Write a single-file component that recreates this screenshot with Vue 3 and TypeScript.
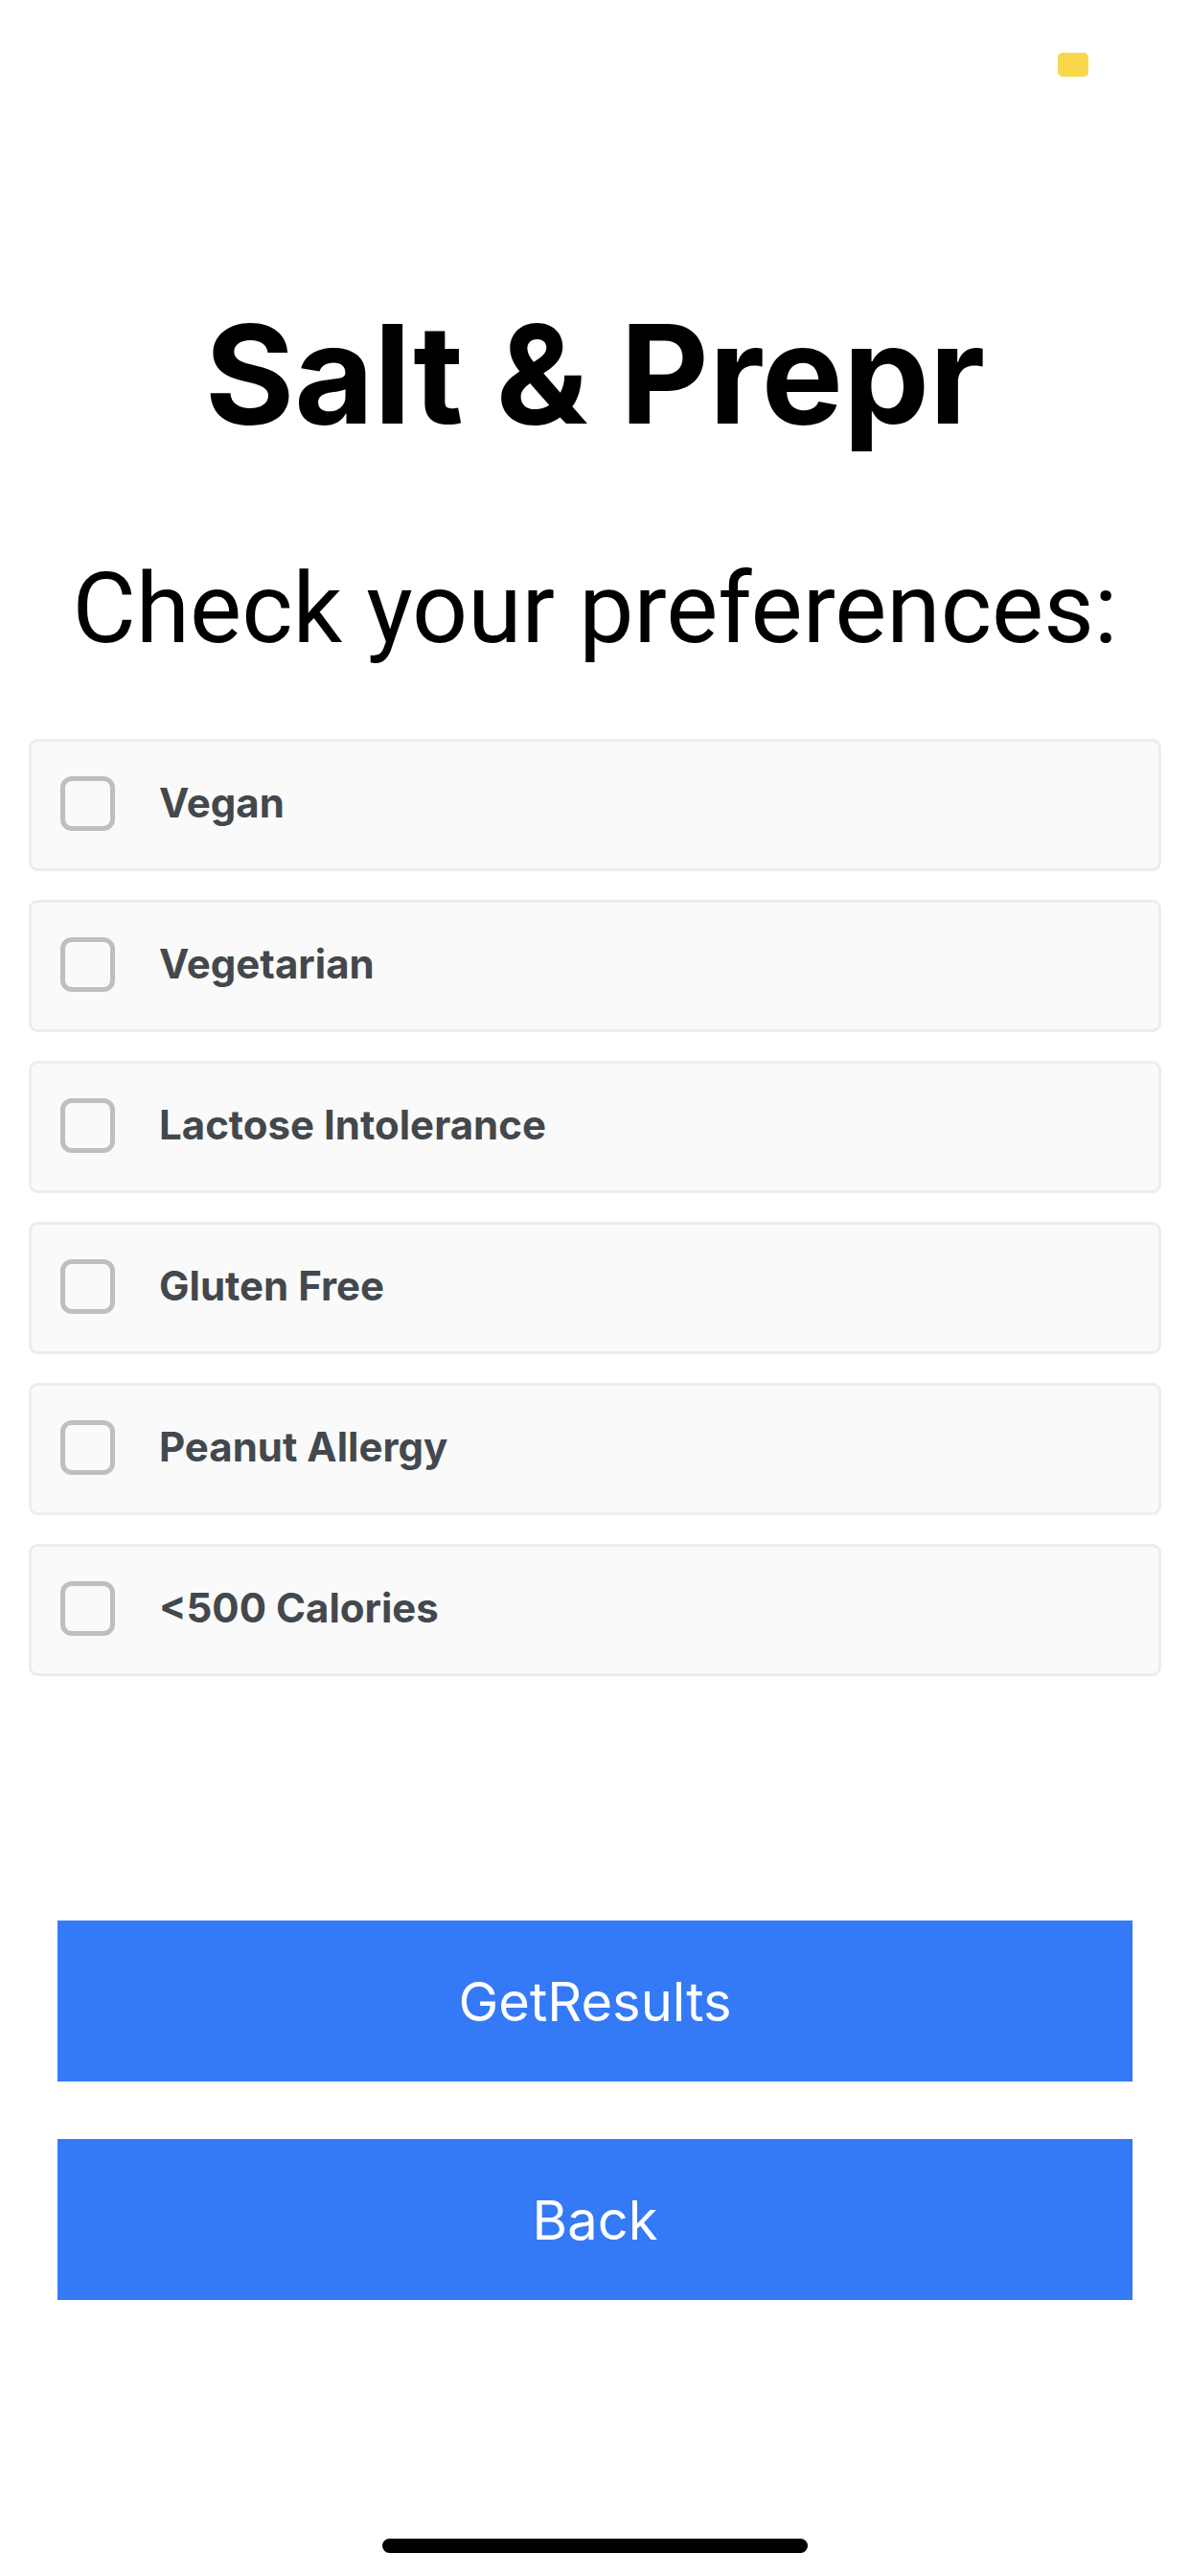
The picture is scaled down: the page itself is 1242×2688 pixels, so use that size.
<script setup lang="ts">
import { ref } from 'vue'

interface Preference {
  id: string
  label: string
}

const preferences: Preference[] = [
  { id: 'vegan', label: 'Vegan' },
  { id: 'vegetarian', label: 'Vegetarian' },
  { id: 'lactose', label: 'Lactose Intolerance' },
  { id: 'gluten', label: 'Gluten Free' },
  { id: 'peanut', label: 'Peanut Allergy' },
  { id: 'calories', label: '<500 Calories' },
]

const selected = ref<string[]>([])
</script>

<template>
  <div class="screen">
    <header class="status-bar">
      <span class="battery"></span>
    </header>

    <main class="content">
      <h1 class="title">Salt &amp; Prepr</h1>
      <h2 class="subtitle">Check your preferences:</h2>

      <ul class="options">
        <li v-for="item in preferences" :key="item.id">
          <label class="option" :for="item.id">
            <input :id="item.id" v-model="selected" class="box" type="checkbox" :value="item.id" />
            <span>{{ item.label }}</span>
          </label>
        </li>
      </ul>

      <div class="actions">
        <button class="action" type="button">GetResults</button>
        <button class="action" type="button">Back</button>
      </div>
    </main>

    <footer class="home">
      <span class="home-bar"></span>
    </footer>
  </div>
</template>

<style>
body {
  margin: 0;
  background: #fff;
}
</style>

<style scoped>
.screen {
  display: flex;
  flex-direction: column;
  box-sizing: border-box;
  min-height: 100vh;
  background: #fff;
  color: #000;
  font-family: Inter, "Liberation Sans", sans-serif;
}

.status-bar {
  display: flex;
  justify-content: flex-end;
  padding: 55px 106px 0;
}

.battery {
  width: 32px;
  height: 25px;
  border-radius: 5px;
  background: #f8d74a;
}

.content {
  padding: 220px 30px 0;
}

.title {
  margin: 0;
  font-size: 143px;
  font-weight: 700;
  line-height: 180px;
  text-align: center;
}

.subtitle {
  margin: 92px 0 0;
  font-family: Roboto, Inter, sans-serif;
  font-size: 102px;
  font-weight: 400;
  line-height: 126px;
  text-align: center;
}

.options {
  display: flex;
  flex-direction: column;
  gap: 30px;
  margin: 73px 0 0;
  padding: 0;
  list-style: none;
}

.option {
  display: flex;
  align-items: center;
  gap: 46px;
  box-sizing: border-box;
  height: 138px;
  padding: 0 30px 4px;
  border: 3px solid #ededed;
  border-radius: 9px;
  background: #fafafa;
  color: #43484d;
  font-size: 42px;
  font-weight: 700;
  line-height: 50px;
}

.box {
  flex: none;
  box-sizing: border-box;
  width: 57px;
  height: 57px;
  margin: 0;
  border: 5px solid #bfbfbf;
  border-radius: 12px;
  background: #fafafa;
  appearance: none;
}

.box:checked {
  background: #347af6;
}

.actions {
  display: flex;
  flex-direction: column;
  gap: 60px;
  margin: 255px 30px 0;
}

.action {
  height: 168px;
  padding: 2px 0 0;
  border: 0;
  background: #347af6;
  color: #fff;
  font-family: inherit;
  font-size: 56px;
  font-weight: 400;
  line-height: 72px;
}

.home {
  display: flex;
  justify-content: center;
  margin-top: auto;
  padding: 60px 0 24px;
}

.home-bar {
  width: 444px;
  height: 15px;
  border-radius: 8px;
  background: #000;
}
</style>
